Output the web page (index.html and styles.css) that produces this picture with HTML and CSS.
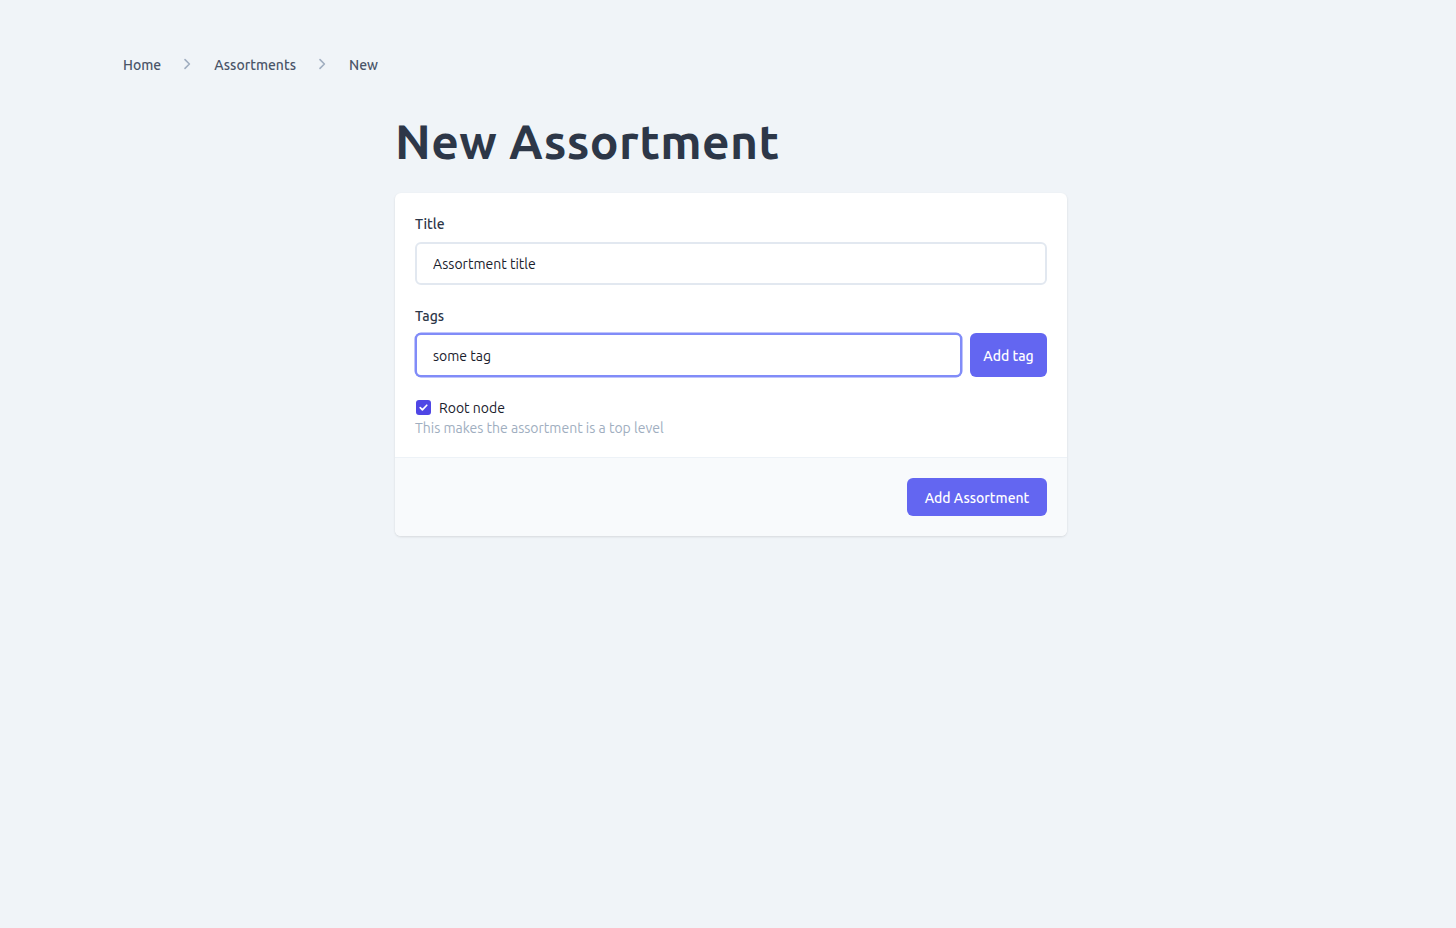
FILE: index.html
```html
<!DOCTYPE html>
<html lang="en">
<head>
<meta charset="utf-8">
<title>New Assortment</title>
<link rel="stylesheet" href="styles.css">
</head>
<body>
<div class="page">
  <nav class="breadcrumb">
    <a class="crumb" href="#">Home</a>
    <svg class="sep" viewBox="0 0 20 20" width="16" height="16"><path d="M7.5 4.5l5.5 5.5-5.5 5.5" fill="none" stroke="currentColor" stroke-width="2" stroke-linecap="round" stroke-linejoin="round"/></svg>
    <a class="crumb" href="#">Assortments</a>
    <svg class="sep" viewBox="0 0 20 20" width="16" height="16"><path d="M7.5 4.5l5.5 5.5-5.5 5.5" fill="none" stroke="currentColor" stroke-width="2" stroke-linecap="round" stroke-linejoin="round"/></svg>
    <span class="crumb">New</span>
  </nav>
  <main class="main">
    <h1 class="title">New Assortment</h1>
    <form class="card">
      <div class="card-body">
        <div class="field">
          <label class="label">Title</label>
          <input class="input" type="text" value="Assortment title">
        </div>
        <div class="field">
          <label class="label label-tags">Tags</label>
          <div class="tag-row">
            <input class="input input-focus" type="text" value="some tag">
            <button type="button" class="btn btn-small">Add tag</button>
          </div>
        </div>
        <div class="check-field">
          <div class="check-row">
            <span class="checkbox"><svg viewBox="0 0 16 16" width="15" height="15"><path d="M4.5 8.2l2.3 2.3 4.7-4.9" fill="none" stroke="#fff" stroke-width="1.8" stroke-linecap="round" stroke-linejoin="round"/></svg></span>
            <span class="check-label">Root node</span>
          </div>
          <p class="help">This makes the assortment is a top level</p>
        </div>
      </div>
      <div class="card-footer">
        <button type="button" class="btn btn-main">Add Assortment</button>
      </div>
    </form>
  </main>
</div>
</body>
</html>
```
FILE: styles.css
```css
* { box-sizing: border-box; }
html, body { margin: 0; padding: 0; }
body {
  background: #f0f4f8;
  font-family: "Ubuntu", "Noto Sans", "Open Sans", sans-serif;
  color: #2d3748;
  min-height: 928px;
}
.page { padding: 54px 0 0 123px; }
.breadcrumb {
  display: flex;
  align-items: center;
  font-size: 14px;
  font-weight: 500;
  color: #4a5568;
  height: 22px;
}
.crumb { color: #4a5568; text-decoration: none; }
.sep { color: #a0aec0; margin: 0 19px 0 18px; position: relative; top: -1px; }
.main {
  width: 672px;
  margin-left: 272px;
  padding-top: 34px;
}
.title {
  margin: 0 0 21px 0;
  font-size: 48px;
  font-weight: 700;
  line-height: 62px;
  color: #2d3748;
  letter-spacing: 0.4px;
}
.card {
  background: #fff;
  border-radius: 6px;
  box-shadow: 0 1px 3px rgba(0,0,0,0.08), 0 1px 2px rgba(0,0,0,0.04);
  overflow: hidden;
}
.card-body { padding: 22px 20px 19px; }
.field { margin-bottom: 22px; }
.label {
  display: block;
  font-size: 14px;
  font-weight: 500;
  color: #2d3748;
  line-height: 18px;
  margin-bottom: 9px;
}
.label-tags { margin-bottom: 8px; }
.input {
  display: block;
  width: 100%;
  height: 43px;
  border: 2px solid #e2e8f0;
  border-radius: 6px;
  padding: 0 16px;
  font-family: inherit;
  font-size: 14px;
  color: #1a202c;
  background: #fff;
  outline: none;
}
.input-focus {
  height: 44px;
  padding-top: 1px;
  border-color: #818cf8;
  box-shadow: 0 0 0 0.5px #818cf8;
  flex: 1;
}
.tag-row { display: flex; gap: 8px; }
.btn {
  font-family: inherit;
  border: 0;
  background: #6366f1;
  color: #fff;
  font-size: 14px;
  font-weight: 500;
  border-radius: 6px;
  cursor: pointer;
  padding: 2px 0 0;
}
.btn-small { height: 44px; width: 77px; flex: none; }
.check-field { margin-top: 4px; }
.check-row { display: flex; align-items: center; gap: 8px; height: 18px; }
.checkbox {
  width: 15px; height: 15px;
  background: #4f46e5;
  border-radius: 3px;
  display: inline-flex;
  margin-left: 1px;
  position: relative;
  top: -1px;
}
.check-label { font-size: 14px; color: #1a202c; }
.help { margin: 1px 0 0; font-size: 14px; color: #a0aec0; line-height: 20px; }
.card-footer {
  background: #f8fafc;
  border-top: 1px solid #edf2f7;
  padding: 20px;
  display: flex;
  justify-content: flex-end;
}
.btn-main { height: 38px; width: 140px; }
```
